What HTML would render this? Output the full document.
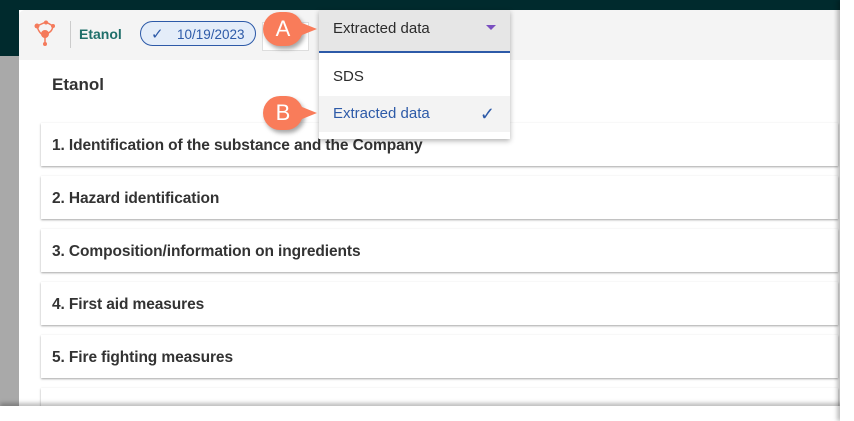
<!DOCTYPE html>
<html style="overflow:hidden;height:421px"><head><style>
body{margin:0;width:854px;height:421px;background:#fff;position:relative;overflow:hidden;font-family:"Liberation Sans",sans-serif}
.abs{position:absolute}
.card{position:absolute;left:41px;width:797px;height:43px;background:#fff;box-shadow:0 1px 2px rgba(0,0,0,.35);font-size:15.5px;font-weight:bold;color:#333;line-height:46px;padding-left:11px;box-sizing:border-box;letter-spacing:-0.1px}
.call{position:absolute;width:40px;height:34px;border-radius:17px;background:#f97c5a;color:#fff;font-size:22px;text-align:center;line-height:34px;box-shadow:2px 3px 4px rgba(0,0,0,.35)}
.call:after{content:"";position:absolute;right:-14px;top:9px;border-left:20px solid #f97c5a;border-top:8px solid transparent;border-bottom:8px solid transparent}
</style></head><body>
<div class="abs" style="left:0;top:0;width:854px;height:10px;background:#002a2d"></div>
<div class="abs" style="left:0;top:0;width:19px;height:56px;background:#002a2d"></div>
<div class="abs" style="left:0;top:56px;width:19px;height:350px;background:#a9a9a9"></div>
<div class="abs" style="left:19px;top:10px;width:821px;height:50px;background:#f4f4f4;border-top-left-radius:6px"></div>
<svg class="abs" style="left:34px;top:20px" width="28" height="28" viewBox="0 0 28 28"><g stroke="#f47a5b" stroke-width="1.5" fill="none"><path d="M3 6 L12 2 L19 6 M3 6 Q5 14 11 16 M19 6 Q18 13 11 14 M11 16 L11 24"/></g><g fill="#f47a5b"><circle cx="3" cy="6" r="2.5"/><circle cx="12" cy="2.5" r="2"/><circle cx="19" cy="6" r="2"/><circle cx="11" cy="14" r="4"/><circle cx="11" cy="24" r="2"/></g></svg>
<div class="abs" style="left:70px;top:21px;width:1px;height:27px;background:#ccc"></div>
<div class="abs" style="left:79px;top:26px;font-size:14px;font-weight:bold;color:#1f6f6a">Etanol</div>
<div class="abs" style="left:140px;top:21px;width:116px;height:25px;border:1px solid #2d5aa8;border-radius:14px;background:#e4edf9;font-size:13.5px;color:#2d5aa8;line-height:25px;box-sizing:border-box"><span style="position:absolute;left:10px;font-size:15px">✓</span><span style="position:absolute;left:36px">10/19/2023</span></div>
<div class="abs" style="left:262px;top:22px;width:45px;height:27px;border:1px solid #ddd;background:#fff"></div>
<div class="abs" style="left:52px;top:75px;font-size:17px;font-weight:bold;color:#333">Etanol</div>
<div class="card" style="top:123px">1. Identification of the substance and the Company</div>
<div class="card" style="top:176px">2. Hazard identification</div>
<div class="card" style="top:229px">3. Composition/information on ingredients</div>
<div class="card" style="top:282px">4. First aid measures</div>
<div class="card" style="top:335px">5. Fire fighting measures</div>
<div class="card" style="top:388px;height:20px"></div>
<div class="abs" style="left:319px;top:10px;width:191px;height:129px;background:#fff;box-shadow:0 2px 5px rgba(0,0,0,.3)">
<div style="height:41px;background:#e6e6e6;border-bottom:2px solid #2d5aa8;font-size:15px;color:#2b2b2b;line-height:37px;padding-left:14px;position:relative">Extracted data<span style="position:absolute;right:14px;top:15px;border-top:5px solid #7a4fc0;border-left:5px solid transparent;border-right:5px solid transparent"></span></div>
<div style="height:43px;line-height:47px;font-size:15px;color:#2b2b2b;padding-left:14px">SDS</div>
<div style="height:36px;line-height:36px;background:#f3f3f3;font-size:15px;color:#2d5aa8;padding-left:14px;position:relative">Extracted data<span style="position:absolute;right:15px;color:#2d5aa8;font-size:18px">✓</span></div>
</div>
<div class="call" style="left:263px;top:12px">A</div>
<div class="call" style="left:263px;top:96px">B</div>
<div class="abs" style="left:0;top:406px;width:854px;height:15px;background:#fff;box-shadow:0 -3px 4px rgba(0,0,0,.25)"></div>
<div class="abs" style="left:840px;top:0;width:14px;height:421px;background:#fff;box-shadow:-3px 0 4px rgba(0,0,0,.25)"></div>
</body></html>
